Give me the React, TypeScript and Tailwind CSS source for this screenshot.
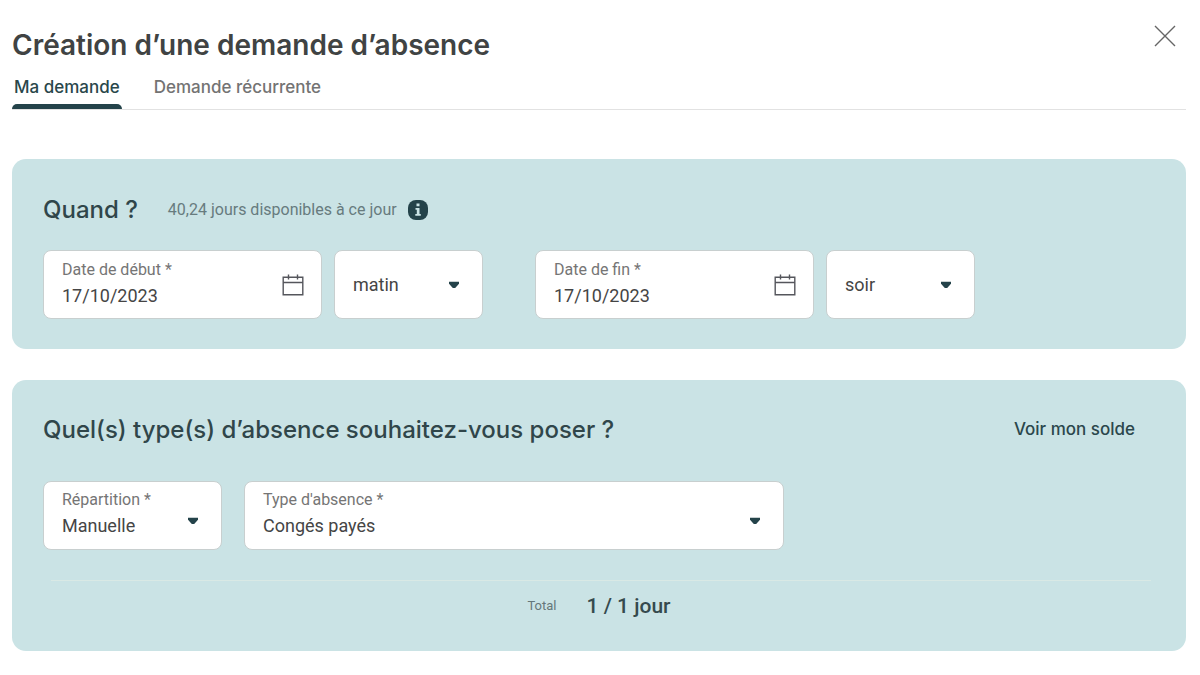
import type { ReactNode } from 'react'

function CalendarIcon() {
  return (
    <svg width="22" height="22" viewBox="0 0 22 22" fill="none" stroke="#55565c" strokeWidth="1.4" aria-hidden="true">
      <path d="M1.2 3.2h19.6v17.6H1.2zM1.2 8.5h19.6M6.5 0.5v5M15.5 0.5v5" />
    </svg>
  )
}

function Caret() {
  return (
    <svg width="12" height="8" viewBox="0 0 12 8" aria-hidden="true">
      <path d="M1 0.8h10v2L7.2 7H4.8L1 2.8z" fill="#24434a" />
    </svg>
  )
}

function FieldBox({ className, children }: { className: string; children: ReactNode }) {
  return (
    <div className={`flex h-[69px] items-center rounded-lg border border-[#c8cfcf] bg-white pl-[18px] ${className}`}>
      {children}
    </div>
  )
}

function DateField({ id, label, value }: { id: string; label: string; value: string }) {
  return (
    <FieldBox className="w-[279px] pr-[17px]">
      <div className="flex min-w-0 flex-1 flex-col pb-0.5">
        <label htmlFor={id} className="text-base leading-6 text-[#757575]">
          {label}
        </label>
        <input id={id} type="text" defaultValue={value} className="h-7 w-full text-lg text-[#454545] outline-none" />
      </div>
      <button type="button" aria-label="Ouvrir le calendrier">
        <CalendarIcon />
      </button>
    </FieldBox>
  )
}

function MomentField({ label, options }: { label: string; options: string[] }) {
  return (
    <FieldBox className="w-[149px] pr-[22px]">
      <select aria-label={label} className="h-7 min-w-0 flex-1 appearance-none text-lg text-[#454545] outline-none">
        {options.map((option) => (
          <option key={option}>{option}</option>
        ))}
      </select>
      <Caret />
    </FieldBox>
  )
}

type SelectFieldProps = {
  id: string
  label: string
  options: string[]
  className: string
}

function SelectField({ id, label, options, className }: SelectFieldProps) {
  return (
    <FieldBox className={`pr-[22px] ${className}`}>
      <div className="flex min-w-0 flex-1 flex-col pb-1">
        <label htmlFor={id} className="text-base leading-6 text-[#757575]">
          {label}
        </label>
        <select id={id} className="h-7 w-full appearance-none text-lg text-[#454545] outline-none">
          {options.map((option) => (
            <option key={option}>{option}</option>
          ))}
        </select>
      </div>
      <div className="pt-2.5">
        <Caret />
      </div>
    </FieldBox>
  )
}

export default function App() {
  return (
    <main className="bg-white pr-3.5 pb-6 pl-3 font-['Roboto','Liberation_Sans',sans-serif]">
      <header className="flex items-start justify-between pt-[25px] pr-2.5">
        <h1 className="font-['Inter','Liberation_Sans',sans-serif] text-[28px] leading-10 font-semibold text-[#404343]">
          Création d’une demande d’absence
        </h1>
        <button type="button" aria-label="Fermer">
          <svg width="22" height="22" viewBox="0 0 22 22" fill="none" stroke="#666" strokeWidth="1.4" aria-hidden="true">
            <path d="M1 1l20 20M21 1L1 21" />
          </svg>
        </button>
      </header>

      <nav className="flex gap-[30px] border-b border-[#e2e2e2] font-['Inter','Liberation_Sans',sans-serif] text-[17px] leading-6 font-medium">
        <a href="#demande" aria-current="page" className="flex flex-col text-[#29474b]">
          <span className="px-0.5 pt-2.5 pb-[5px]">Ma demande</span>
          <span className="h-[5px] rounded-t-md bg-[#24434a]" />
        </a>
        <a href="#recurrente" className="px-0.5 pt-2.5 text-[#737373]">
          Demande récurrente
        </a>
      </nav>

      <section className="mt-[49px] rounded-[14px] bg-[#cae3e5] px-[31px] pt-[35px] pb-[30px]">
        <div className="flex items-center">
          <h2 className="font-['Inter','Liberation_Sans',sans-serif] text-2xl font-medium text-[#30464a]">Quand ?</h2>
          <p className="ml-[30px] text-base text-[#677b7e]">40,24 jours disponibles à ce jour</p>
          <button type="button" aria-label="Informations" className="ml-2.5">
            <svg width="22" height="22" viewBox="0 0 22 22" aria-hidden="true">
              <rect x="1" y="1" width="20" height="20" rx="8" fill="#24434a" />
              <path d="M9.5 4.5h3v2.8h-3zM8.5 9h4v6h1.3v1.8H8.3V15h1.5v-4.2H8.5z" fill="#cae3e5" />
            </svg>
          </button>
        </div>
        <div className="mt-6 flex flex-wrap gap-x-[52px] gap-y-4">
          <div className="flex gap-3">
            <DateField id="date-debut" label="Date de début *" value="17/10/2023" />
            <MomentField label="Moment de début" options={['matin', 'après-midi']} />
          </div>
          <div className="flex gap-3">
            <DateField id="date-fin" label="Date de fin *" value="17/10/2023" />
            <MomentField label="Moment de fin" options={['soir', 'midi']} />
          </div>
        </div>
      </section>

      <section className="mt-[31px] rounded-[14px] bg-[#cae3e5] px-[31px] pt-[34px] pb-[31px]">
        <div className="flex items-center justify-between pr-5">
          <h2 className="font-['Inter','Liberation_Sans',sans-serif] text-2xl font-medium text-[#30464a]">
            Quel(s) type(s) d’absence souhaitez-vous poser ?
          </h2>
          <a href="#solde" className="font-['Inter','Liberation_Sans',sans-serif] text-[17px] font-medium text-[#2b474c]">
            Voir mon solde
          </a>
        </div>
        <div className="mt-[35px] flex gap-[22px]">
          <SelectField id="repartition" label="Répartition *" options={['Manuelle', 'Automatique']} className="w-[179px]" />
          <SelectField id="type-absence" label="Type d'absence *" options={['Congés payés', 'RTT']} className="w-[540px]" />
        </div>
        <div className="mt-[30px] mr-1 ml-2 border-t border-[#d9e9e5]" />
        <div className="mt-[11px] flex items-center justify-center gap-[30px]">
          <span className="text-[13px] text-[#65777a]">Total</span>
          <strong className="text-[21px] leading-7 font-medium text-[#354a4d]">1 / 1 jour</strong>
        </div>
      </section>
    </main>
  )
}
